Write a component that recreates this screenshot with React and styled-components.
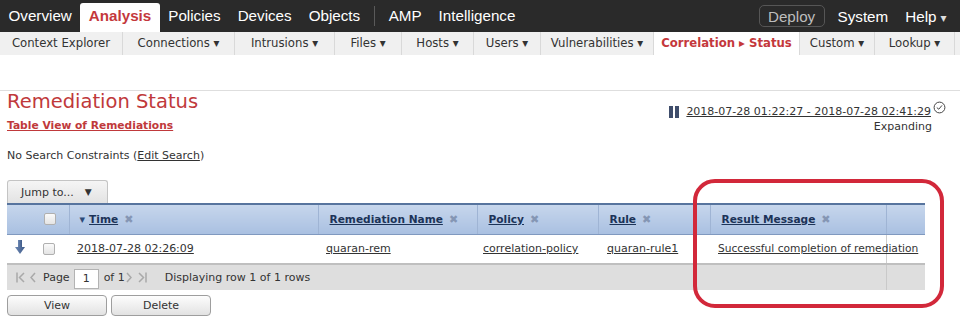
import React from "react";
import styled, { createGlobalStyle } from "styled-components";

const GlobalStyle = createGlobalStyle`
  html, body { margin: 0; padding: 0; background: #fff; }
  body {
    font-family: "DejaVu Sans", Verdana, sans-serif;
    font-size: 11px;
    color: #333;
  }
  * { box-sizing: border-box; }
`;

const Page = styled.div`
  position: relative;
  width: 960px;
  height: 329px;
  overflow: hidden;
`;

/* ---------- top bar ---------- */
const TopBar = styled.nav`
  display: flex;
  align-items: flex-end;
  height: 32px;
  background: #2a2a2a;
  font-family: "Liberation Sans", Arial, sans-serif;
  font-size: 15.2px;
`;

const TopItem = styled.span`
  display: block;
  height: 29px;
  line-height: 26px;
  padding: 0 8.5px 3px;
  color: ${(p) => (p.$active ? "#c4383c" : "#fff")};
  background: ${(p) => (p.$active ? "#fff" : "transparent")};
  font-weight: ${(p) => (p.$active ? 700 : 400)};
  border-radius: 3px 3px 0 0;
  white-space: nowrap;
`;

const TopSep = styled.span`
  align-self: center;
  width: 1px;
  height: 20px;
  background: #5a5a5a;
  margin: 0 5px 0 5.5px;
`;

const RightGroup = styled.div`
  margin-left: auto;
  align-self: stretch;
  display: flex;
  align-items: center;
  padding-right: 5px;
`;

const DeployButton = styled.span`
  display: flex;
  align-items: center;
  justify-content: center;
  width: 66px;
  height: 22px;
  border: 1px solid #565656;
  border-radius: 5px;
  color: #bdbdbd;
  margin-right: 4.5px;
`;

const RightLink = styled.span`
  color: #fff;
  padding: 0 8.5px;
  white-space: nowrap;
`;

const SmallCaret = styled.span`
  font-family: "DejaVu Sans", sans-serif;
  font-size: 12px;
  color: #ddd;
  margin-left: 4px;
`;

/* ---------- sub nav ---------- */
const SubNav = styled.div`
  display: flex;
  height: 23px;
  background: #f0f0f0;
  font-size: 11.7px;
`;

const SubItem = styled.span`
  flex: 0 0 ${(p) => p.$w}px;
  text-align: center;
  line-height: 23px;
  white-space: nowrap;
  color: ${(p) => (p.$active ? "#c4383c" : "#333")};
  font-weight: ${(p) => (p.$active ? 700 : 400)};
  background: ${(p) => (p.$active ? "#fff" : "transparent")};
  border-right: 1px solid #d9d9d9;
`;

const Spacer = styled.div`
  height: 36px;
  border-bottom: 1px solid #dedede;
`;

/* ---------- content ---------- */
const Content = styled.main`
  padding: 0 14px 0 7px;
`;

const TitleRow = styled.div`
  display: flex;
  justify-content: space-between;
  align-items: flex-start;
`;

const TitleCol = styled.div`
  display: flex;
  flex-direction: column;
  align-items: flex-start;
`;

const Title = styled.h1`
  margin: 1px 0 0;
  font-size: 19.5px;
  line-height: 20px;
  font-weight: 400;
  color: #c0393b;
`;

const SubTitle = styled.a`
  margin-top: 7px;
  font-size: 10.7px;
  line-height: 14px;
  font-weight: 700;
  color: #c0393b;
  text-decoration: underline;
`;

const RangeCol = styled.div`
  margin-top: 13px;
  display: flex;
  flex-direction: column;
  align-items: flex-end;
`;

const RangeLine = styled.div`
  display: flex;
  align-items: center;
  height: 15px;
`;

const RangeLink = styled.a`
  color: #333;
  text-decoration: underline;
  margin: 0 2px 0 7px;
  line-height: 15px;
`;

const Expanding = styled.div`
  line-height: 15px;
  margin-right: 14px;
`;

const Constraints = styled.p`
  margin: 15px 0 0;
  line-height: 14px;
`;

const EditLink = styled.a`
  color: #333;
  text-decoration: underline;
`;

const JumpButton = styled.div`
  margin-top: 17px;
  width: 101px;
  height: 23px;
  display: flex;
  align-items: center;
  padding-left: 13px;
  border: 1px solid #c4c4c4;
  border-bottom: none;
  border-radius: 3px 3px 0 0;
  background: linear-gradient(#f5f5f5, #e3e3e3);
  color: #333;
`;

const JumpCaret = styled.span`
  font-size: 9px;
  margin-left: 11px;
`;

/* ---------- table ---------- */
const Table = styled.table`
  width: 918px;
  table-layout: fixed;
  border-collapse: collapse;
`;

const Col = styled.col`
  width: ${(p) => p.$w}px;
`;

const HeadCell = styled.th`
  height: 30px;
  padding: 0 0 0 ${(p) => p.$pad ?? 10}px;
  text-align: left;
  vertical-align: middle;
  white-space: nowrap;
  border-top: 2px solid #57749e;
  border-bottom: 1px solid #8099bf;
  border-right: ${(p) => (p.$divider ? "1px solid #9fb4d4" : "none")};
  background: linear-gradient(#c6d6ec, #a9c0e1);
  font-weight: 700;
  font-size: 10.6px;
  color: #1c3358;
`;

const HeadLink = styled.a`
  color: #1c3358;
  text-decoration: underline;
`;

const SortCaret = styled.span`
  font-size: 11px;
  color: #2c4a78;
  margin-right: 4px;
`;

const CloseMark = styled.span`
  font-size: 11px;
  color: #8596b4;
  margin-left: 6px;
  font-weight: 400;
`;

const Cell = styled.td`
  height: 30px;
  padding: 0 0 0 ${(p) => p.$pad ?? 8}px;
  white-space: nowrap;
  overflow: visible;
  vertical-align: middle;
  border-bottom: 2px solid #bfbfbf;
  border-right: ${(p) => (p.$divider ? "1px solid #cfcfcf" : "none")};
  background: #fff;
  font-size: ${(p) => p.$size ?? 11}px;
`;

const DataLink = styled.a`
  color: #333;
  text-decoration: underline;
`;

const PagerCell = styled.td`
  height: 25px;
  padding: 0;
  background: #dedede;
  border-right: ${(p) => (p.$divider ? "1px solid #c9c9c9" : "none")};
`;

const Pager = styled.div`
  display: flex;
  align-items: center;
  height: 25px;
  padding-left: 9px;
  white-space: nowrap;
`;

const PagerIcon = styled.svg`
  display: block;
  margin-left: ${(p) => p.$ml ?? 0}px;
  flex: none;
`;

const PageInput = styled.span`
  display: flex;
  align-items: center;
  justify-content: center;
  width: 25px;
  height: 20px;
  margin: 2px 5px 0 4px;
  background: #fff;
  border: 1px solid #b3b3b3;
`;

const PagerText = styled.span`
  margin-left: ${(p) => p.$ml ?? 0}px;
`;

const Checkbox = styled.span`
  display: block;
  width: 12px;
  height: 12px;
  border: 1px solid #b0b0b0;
  border-radius: 2px;
  background: linear-gradient(#fafafa, #e4e4e4);
`;

const ButtonRow = styled.div`
  display: flex;
  gap: 4px;
  margin-top: 5px;
`;

const Button = styled.span`
  display: flex;
  align-items: center;
  justify-content: center;
  width: 100px;
  height: 21px;
  border: 1px solid #9e9e9e;
  border-radius: 4px;
  background: linear-gradient(#fdfdfd, #e2e2e2);
  color: #333;
`;

const Annotation = styled.div`
  position: absolute;
  left: 693px;
  top: 179px;
  width: 251px;
  height: 129px;
  border: 4.5px solid #d2283a;
  border-radius: 22px;
  pointer-events: none;
`;

/* ---------- icons ---------- */
const DownArrow = () => (
  <svg width="10" height="14" viewBox="0 0 10 14">
    <defs>
      <linearGradient id="ag" x1="0" x2="1">
        <stop offset="0" stopColor="#6d88b4" />
        <stop offset="1" stopColor="#3e5a88" />
      </linearGradient>
    </defs>
    <rect x="3" y="0" width="4" height="8" fill="url(#ag)" />
    <polygon points="0,7 10,7 5,14" fill="url(#ag)" />
  </svg>
);

const PauseIcon = () => (
  <svg width="10" height="12" viewBox="0 0 10 12">
    <rect x="0" y="0" width="4" height="12" fill="#3f4d6b" />
    <rect x="6" y="0" width="4" height="12" fill="#3f4d6b" />
  </svg>
);

const ClockIcon = () => (
  <svg width="13" height="13" viewBox="0 0 13 13" style={{ alignSelf: "flex-start", marginTop: -3 }}>
    <circle cx="6.5" cy="6.5" r="5.4" fill="none" stroke="#444" strokeWidth="1" />
    <polyline points="3.8,6.6 5.8,8.2 9,4.4" fill="none" stroke="#444" strokeWidth="1" />
  </svg>
);

const grey = "#a9a9a9";

const FirstIcon = ({ ml }) => (
  <PagerIcon $ml={ml} width="9" height="11" viewBox="0 0 9 11">
    <line x1="1" y1="0.5" x2="1" y2="10.5" stroke={grey} strokeWidth="1.5" />
    <polyline points="8,1 3.5,5.5 8,10" fill="none" stroke={grey} strokeWidth="1.5" />
  </PagerIcon>
);
const PrevIcon = ({ ml }) => (
  <PagerIcon $ml={ml} width="6" height="11" viewBox="0 0 6 11">
    <polyline points="5,1 1,5.5 5,10" fill="none" stroke={grey} strokeWidth="1.5" />
  </PagerIcon>
);
const NextIcon = ({ ml }) => (
  <PagerIcon $ml={ml} width="6" height="11" viewBox="0 0 6 11">
    <polyline points="1,1 5,5.5 1,10" fill="none" stroke={grey} strokeWidth="1.5" />
  </PagerIcon>
);
const LastIcon = ({ ml }) => (
  <PagerIcon $ml={ml} width="9" height="11" viewBox="0 0 9 11">
    <polyline points="1,1 5.5,5.5 1,10" fill="none" stroke={grey} strokeWidth="1.5" />
    <line x1="8" y1="0.5" x2="8" y2="10.5" stroke={grey} strokeWidth="1.5" />
  </PagerIcon>
);

const subItems = [
  ["Context Explorer", 123, false, false],
  ["Connections", 112, true, false],
  ["Intrusions", 100, true, false],
  ["Files", 67, true, false],
  ["Hosts", 72, true, false],
  ["Users", 67, true, false],
  ["Vulnerabilities", 113, true, false],
  ["Correlation \u25B8 Status", 146, false, true],
  ["Custom", 75, true, false],
  ["Lookup", 80, true, false],
];

const columns = [
  { label: "Time", sort: true },
  { label: "Remediation Name" },
  { label: "Policy" },
  { label: "Rule" },
  { label: "Result Message" },
];

const row = [
  ["2018-07-28 02:26:09", 8, 11],
  ["quaran-rem", 8, 11],
  ["correlation-policy", 6, 11],
  ["quaran-rule1", 9, 11],
  ["Successful completion of remediation", 8, 10.65],
];

export default function App() {
  return (
    <Page>
      <GlobalStyle />
      <TopBar>
        <TopItem>Overview</TopItem>
        <TopItem $active>Analysis</TopItem>
        <TopItem>Policies</TopItem>
        <TopItem>Devices</TopItem>
        <TopItem>Objects</TopItem>
        <TopSep />
        <TopItem>AMP</TopItem>
        <TopItem>Intelligence</TopItem>
        <RightGroup>
          <DeployButton>Deploy</DeployButton>
          <RightLink>System</RightLink>
          <RightLink>
            Help<SmallCaret>▾</SmallCaret>
          </RightLink>
        </RightGroup>
      </TopBar>

      <SubNav>
        {subItems.map(([label, w, caret, active]) => (
          <SubItem key={label} $w={w} $active={active}>
            {label}
            {caret ? " \u25BE" : ""}
          </SubItem>
        ))}
      </SubNav>
      <Spacer />

      <Content>
        <TitleRow>
          <TitleCol>
            <Title>Remediation Status</Title>
            <SubTitle>Table View of Remediations</SubTitle>
          </TitleCol>
          <RangeCol>
            <RangeLine>
              <PauseIcon />
              <RangeLink>2018-07-28 01:22:27 - 2018-07-28 02:41:29</RangeLink>
              <ClockIcon />
            </RangeLine>
            <Expanding>Expanding</Expanding>
          </RangeCol>
        </TitleRow>

        <Constraints>
          No Search Constraints (<EditLink>Edit Search</EditLink>)
        </Constraints>

        <JumpButton>
          Jump to...<JumpCaret>▼</JumpCaret>
        </JumpButton>

        <Table>
          <colgroup>
            <Col $w={28} />
            <Col $w={34} />
            <Col $w={249} />
            <Col $w={159} />
            <Col $w={121} />
            <Col $w={112} />
            <Col $w={176} />
            <Col $w={39} />
          </colgroup>
          <thead>
            <tr>
              <HeadCell $pad={8} />
              <HeadCell $pad={9} $divider>
                <Checkbox />
              </HeadCell>
              {columns.map((c) => (
                <HeadCell key={c.label} $divider $pad={c.sort ? 10 : 11}>
                  {c.sort && <SortCaret>▾</SortCaret>}
                  <HeadLink>{c.label}</HeadLink>
                  <CloseMark>✖</CloseMark>
                </HeadCell>
              ))}
              <HeadCell />
            </tr>
          </thead>
          <tbody>
            <tr>
              <Cell $pad={8}>
                <DownArrow />
              </Cell>
              <Cell $pad={8}>
                <Checkbox />
              </Cell>
              {row.map(([text, pad, size], i) => (
                <Cell key={text} $pad={pad} $size={size} $divider={i === row.length - 1}>
                  <DataLink>{text}</DataLink>
                </Cell>
              ))}
              <Cell />
            </tr>
            <tr>
              <PagerCell colSpan={7} $divider>
                <Pager>
                  <FirstIcon />
                  <PrevIcon ml={5} />
                  <PagerText $ml={7}>Page</PagerText>
                  <PageInput>1</PageInput>
                  <PagerText>of 1</PagerText>
                  <NextIcon ml={1} />
                  <LastIcon ml={6} />
                  <PagerText $ml={18}>Displaying row 1 of 1 rows</PagerText>
                </Pager>
              </PagerCell>
              <PagerCell />
            </tr>
          </tbody>
        </Table>

        <ButtonRow>
          <Button>View</Button>
          <Button>Delete</Button>
        </ButtonRow>
      </Content>

      <Annotation />
    </Page>
  );
}
